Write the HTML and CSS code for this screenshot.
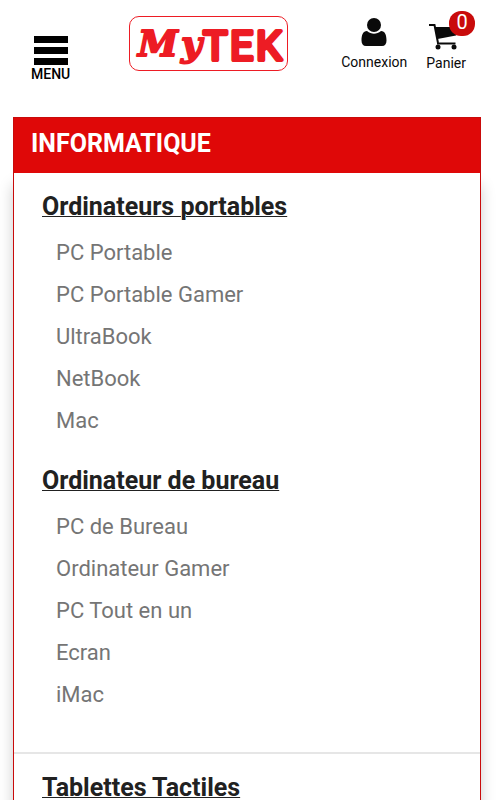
FILE: index.html
```html
<!DOCTYPE html>
<html lang="fr">
<head>
    <meta charset="UTF-8">
    <meta name="viewport" content="width=device-width, initial-scale=1.0">
    <title>MyTEK</title>
    <link rel="stylesheet" href="styles.css">
</head>
<body>

<header class="topbar">
    <button class="menu" type="button">
        <span class="bars"><span></span><span></span><span></span></span>
        MENU
    </button>

    <a class="logo" href="#" aria-label="MyTEK">
        <svg width="157" height="53" viewBox="0 0 157 53">
            <text class="logo-my"><tspan x="8" y="39">M</tspan><tspan x="51" y="39">y</tspan><tspan class="logo-tek" x="73 100 126" y="43">TEK</tspan></text>
        </svg>
    </a>

    <nav class="account">
        <a class="account-link" href="#">
            <svg width="26" height="28" viewBox="0 0 26 28" fill="#0a0a0a">
                <circle cx="13" cy="7" r="7"/>
                <path d="M6 13C2 13 .5 17 .5 22.500c0 3.500 1.500 5.500 4.500 5.500h16c3 0 4.500-2 4.500-5.500C25.500 17 24 13 20 13c-4.500 3.500-9.500 3.500-14 0z"/>
            </svg>
            Connexion
        </a>
        <a class="account-link cart" href="#">
            <svg width="34" height="28" viewBox="0 0 34 28" fill="#0a0a0a">
                <path d="M0 3h5.500L9 21" fill="none" stroke="#0a0a0a" stroke-width="2"/>
                <path d="M6 5h22L27 13.500 8.500 17z"/>
                <path d="M8 20.500h18.500v2H8z"/>
                <circle cx="9" cy="25" r="2.500"/>
                <circle cx="25" cy="25" r="2.500"/>
            </svg>
            <span class="badge">0</span>
            Panier
        </a>
    </nav>
</header>

<main class="card">
    <h1>INFORMATIQUE</h1>

    <div class="column">
        <h2><a href="#">Ordinateurs portables</a></h2>
        <ul>
            <li><a href="#">PC Portable</a></li>
            <li><a href="#">PC Portable Gamer</a></li>
            <li><a href="#">UltraBook</a></li>
            <li><a href="#">NetBook</a></li>
            <li><a href="#">Mac</a></li>
        </ul>

        <h2><a href="#">Ordinateur de bureau</a></h2>
        <ul>
            <li><a href="#">PC de Bureau</a></li>
            <li><a href="#">Ordinateur Gamer</a></li>
            <li><a href="#">PC Tout en un</a></li>
            <li><a href="#">Ecran</a></li>
            <li><a href="#">iMac</a></li>
        </ul>
    </div>

    <div class="column">
        <h2><a href="#">Tablettes Tactiles</a></h2>
    </div>
</main>

</body>
</html>
```
FILE: styles.css
```css
* {
    margin: 0;
    padding: 0;
    box-sizing: border-box;
}
html {
    scrollbar-width: none;
}
body {
    background-color: #fff;
    font-family: Roboto, sans-serif;
    color: #0a0a0a;
}
a {
    color: inherit;
    text-decoration: none;
}

.topbar {
    display: flex;
    align-items: flex-start;
    justify-content: space-between;
    height: 117px;
    padding: 0 36px 0 31px;
}
.menu {
    display: flex;
    flex-direction: column;
    align-items: center;
    margin-top: 36px;
    border: none;
    background: none;
    color: #000;
    font-family: inherit;
    font-size: 14px;
    font-weight: 500;
    line-height: 16px;
    cursor: pointer;
}
.bars {
    display: flex;
    flex-direction: column;
    gap: 4px;
    width: 34px;
    margin-bottom: 1px;
}
.bars span {
    height: 7px;
    background-color: #000;
}

.logo {
    width: 159px;
    height: 55px;
    margin: 16px 0 0 6px;
    border: 1px solid #ed1c24;
    border-radius: 10px;
}
.logo svg {
    display: block;
}
.logo text {
    fill: #ed1c24;
    stroke: #ed1c24;
    stroke-linejoin: round;
}
.logo-my {
    font-family: "DejaVu Serif", serif;
    font-size: 36px;
    font-weight: bold;
    font-style: italic;
    stroke-width: 2px;
}
.logo-tek {
    font-family: Roboto, sans-serif;
    font-size: 41px;
    font-weight: 400;
    font-style: normal;
    stroke-width: 4px;
}

.account {
    display: flex;
    gap: 19px;
    margin-top: 18px;
}
.account-link {
    display: flex;
    flex-direction: column;
    align-items: center;
    gap: 8px;
    font-size: 14px;
    line-height: 16px;
}
.cart {
    position: relative;
    padding-top: 4px;
    gap: 5px;
}
.badge {
    position: absolute;
    top: -7px;
    right: -9px;
    width: 26px;
    height: 25px;
    border-radius: 12px;
    background-color: #c90b0b;
    color: #fff;
    font-size: 20px;
    line-height: 22px;
    text-align: center;
}

.card {
    margin: 0 21px 0 13px;
    border: 1px solid #c90b0b;
    box-shadow: 0 68px 14px rgba(0, 0, 0, 0.2);
}
.card h1 {
    padding: 11px 17px 14px;
    background-color: #df0808;
    color: #fff;
    font-size: 25px;
    font-weight: bold;
    line-height: 30px;
}
.column {
    padding: 13px 28px 36px;
}
.column + .column {
    border-top: 2px solid #e6e6e6;
}
.column h2 {
    margin-bottom: 4px;
    color: #212121;
    font-size: 25px;
    font-weight: bold;
    line-height: 42px;
}
.column h2 a {
    text-decoration: underline;
    text-decoration-thickness: 1px;
}
.column ul {
    padding-left: 14px;
    list-style: none;
}
.column ul + h2 {
    margin-top: 18px;
}
.column li {
    color: #757575;
    font-size: 22px;
    line-height: 42px;
}
```
